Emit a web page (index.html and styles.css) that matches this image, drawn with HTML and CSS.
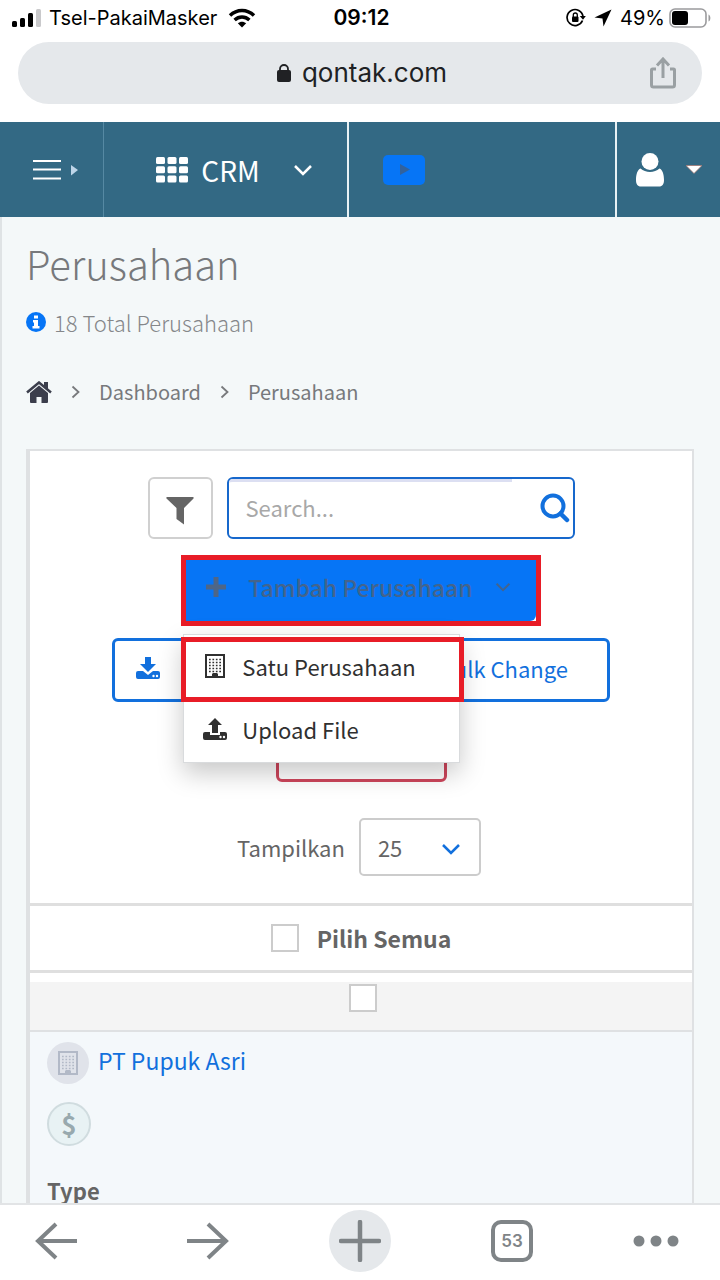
FILE: index.html
```html
<!DOCTYPE html>
<html lang="id">
<head>
<meta charset="utf-8">
<meta name="viewport" content="width=device-width, initial-scale=1">
<title>Perusahaan</title>
<link rel="stylesheet" href="styles.css">
</head>
<body>
<svg class="defs" width="0" height="0" aria-hidden="true">
  <symbol id="building" viewBox="0 0 20 24">
    <path d="M1 1h18v22H1z" fill="none" stroke="currentColor" stroke-width="2"/>
    <path d="M4 5.500h12M4 8.500h12M4 11.500h12M4 14.500h12M4 17.500h12" stroke="currentColor" stroke-width="1.600" stroke-dasharray="1.700 1.733"/>
    <path d="M7 23v-3l1-1h4l1 1v3z" fill="currentColor"/>
  </symbol>
  <symbol id="chevron" viewBox="0 0 20 12">
    <path d="M2 2l8 8 8-8" fill="none" stroke="currentColor" stroke-width="2.500"/>
  </symbol>
</svg>
<div class="status">
  <div class="status-left">
    <svg width="30" height="20" viewBox="0 0 30 20"><rect x="0" y="13" width="5" height="6" rx="1.500"/><rect x="8" y="10" width="5" height="9" rx="1.500"/><rect x="16" y="5" width="5" height="14" rx="1.500"/><rect x="24" y="1" width="5" height="18" rx="1.500" fill="#c9c9cb"/></svg>
    <span>Tsel-PakaiMasker</span>
    <svg class="wifi" width="28" height="20" viewBox="0 0 28 20"><path d="M2 7.500C9 .800 19 .800 26 7.500M6.600 12C11 8 17 8 21.400 12" fill="none" stroke="#000" stroke-width="3.500"/><path d="M9.800 15.300c2.500-2.200 5.900-2.200 8.400 0L14 19.500z"/></svg>
  </div>
  <time class="clock">09:12</time>
  <div class="status-right">
    <svg width="20" height="20" viewBox="0 0 20 20"><path d="M16.500 12.500a8 8 0 1 1 .500-4" fill="none" stroke="#000" stroke-width="1.700"/><path d="M13.800 8h6L17 11.800z"/><rect x="6" y="8.500" width="6.500" height="5.500" rx="1"/><path d="M7.300 9V7a2 2 0 0 1 4 0v2" fill="none" stroke="#000" stroke-width="1.300"/></svg>
    <svg width="18" height="18" viewBox="0 0 18 18"><path d="M17.500 .500L.500 8.500l8 1 1 8z"/></svg>
    <span class="percent">49%</span>
    <svg width="42" height="20" viewBox="0 0 42 20"><rect x="1" y="1" width="36" height="18" rx="5" fill="none" stroke="#9b9b9d" stroke-width="1.600"/><rect x="3" y="3" width="16" height="14" rx="3"/><path d="M39.500 6.500c2.500 1 2.500 6 0 7z" fill="#9b9b9d"/></svg>
  </div>
</div>
<header class="address">
  <button class="url" type="button">
    <svg width="14" height="18" viewBox="0 0 14 18"><rect y="6" width="14" height="12" rx="2"/><path d="M3 7V5a4 4 0 0 1 8 0v2" fill="none" stroke="#202124" stroke-width="1.800"/></svg>
    qontak.com
  </button>
  <button class="share" type="button" aria-label="Bagikan">
    <svg width="26" height="32" viewBox="0 0 26 32" fill="none" stroke="#9aa0a3" stroke-width="3"><path d="M6 12H2.500q-1 0-1 1v15q0 2 2 2h19q2 0 2-2V13q0-1-1-1H20M13 21V3M7 8.500L13 2l6 6.500"/></svg>
  </button>
</header>
<nav class="topnav">
  <button class="cell side" type="button" aria-label="Menu">
    <svg width="46" height="22" viewBox="0 0 46 22"><path d="M0 2h28M0 10.500h28M0 19.500h28" stroke="#fff" stroke-width="1.800"/><path d="M38 6l7 5-7 5.500z" fill="#bed5e8"/></svg>
  </button>
  <button class="cell crm" type="button">
    <svg width="32" height="26" viewBox="0 0 32 26" fill="#fff"><g id="tiles"><rect width="9" height="7" rx="1.500"/><rect x="11.500" width="9" height="7" rx="1.500"/><rect x="23" width="9" height="7" rx="1.500"/></g><use href="#tiles" y="9.200"/><use href="#tiles" y="18.400"/></svg>
    <span>CRM</span>
    <svg class="crm-chevron" width="20" height="12"><use href="#chevron"/></svg>
  </button>
  <div class="cell video">
    <button class="plain" type="button" aria-label="Video"><svg width="42" height="30" viewBox="0 0 42 30"><rect width="42" height="30" rx="5" fill="#0675f6"/><path d="M17 9l10 5.500L17 20z" fill="#32629c"/></svg></button>
  </div>
  <button class="cell user" type="button" aria-label="Akun">
    <svg width="28" height="34" viewBox="0 0 28 34" fill="#fff"><circle cx="14" cy="8.500" r="8.500"/><path d="M4.500 15.500c5 4.500 14 4.500 19 0 3 1 4.500 6 4.500 11.500 0 4-1.500 6.500-5 6.500H5c-3.500 0-5-2.500-5-6.500 0-5.500 1.500-10.500 4.500-11.500z"/></svg>
    <svg width="16" height="9" viewBox="0 0 16 9"><path d="M0 .500h16L8 8.500z" fill="#fff" stroke="#a36e65" stroke-width=".7"/></svg>
  </button>
</nav>
<main class="page">
  <h1>Perusahaan</h1>
  <p class="total">
    <svg width="20" height="20" viewBox="0 0 20 20"><circle cx="10" cy="10" r="10" fill="#0675f6"/><path d="M8 3.500h4v3H8zM7 8h5v6h1.500v2.500h-7V14H8v-3.500H7z" fill="#fff"/></svg>
    18 Total Perusahaan
  </p>
  <nav class="crumbs">
    <a href="#" aria-label="Beranda"><svg width="26" height="22" viewBox="0 0 26 22"><path d="M1 11.500L13 1.500l12 10" fill="none" stroke="#3b3e4c" stroke-width="2.500"/><path d="M18 1h4v8l-4-3z" fill="#3b3e4c"/><path d="M4 12l9-7.500 9 7.500v9q0 1-1 1h-5.500v-6h-5v6H5q-1 0-1-1z" fill="#3b3e4c"/></svg></a>
    <svg class="sep" width="9" height="14" viewBox="0 0 9 14"><path d="M1.500 1.500L7.500 7l-6 5.500" fill="none" stroke="#77797c" stroke-width="1.800"/></svg>
    <a href="#">Dashboard</a>
    <svg class="sep" width="9" height="14" viewBox="0 0 9 14"><path d="M1.500 1.500L7.500 7l-6 5.500" fill="none" stroke="#77797c" stroke-width="1.800"/></svg>
    <a href="#">Perusahaan</a>
  </nav>
  <section class="card">
    <div class="tools">
      <div class="tool-row">
        <button class="filter" type="button" aria-label="Filter"><svg width="28" height="28" viewBox="0 0 28 28"><path d="M1 0h26q1 0 .500 1.500L18 11v16.500L10.500 22V11L.500 1.500Q0 0 1 0z" fill="#656565"/></svg></button>
        <form class="search">
          <input type="search" aria-label="Search" placeholder="Search...">
          <button class="plain" type="button" aria-label="Cari"><svg width="30" height="30" viewBox="0 0 30 30" fill="none" stroke="#1270dd"><circle cx="13" cy="13" r="10.500" stroke-width="4"/><path d="M20.500 20.500L27 27" stroke-width="4.500" stroke-linecap="round"/></svg></button>
        </form>
      </div>
      <div class="add-wrap">
        <button class="add" type="button">
          <svg width="20" height="20" viewBox="0 0 20 20"><path d="M10 0v20M0 10h20" stroke="#4e6687" stroke-width="5"/></svg>
          <span>Tambah Perusahaan</span>
          <svg width="16" height="10"><use href="#chevron"/></svg>
        </button>
        <div class="menu">
          <button class="item marked" type="button"><svg width="20" height="24"><use href="#building"/></svg>Satu Perusahaan</button>
          <button class="item" type="button"><svg width="24" height="22" viewBox="0 0 24 22"><path d="M12 0l7 7h-4v8H9V7H5zM2 14h5v3h10v-3h5q2 0 2 2v4q0 2-2 2H2q-2 0-2-2v-4q0-2 2-2z" fill="#303030"/><circle cx="17.500" cy="19" r="1.200" fill="#fff"/><circle cx="21" cy="19" r="1.200" fill="#fff"/></svg>Upload File</button>
        </div>
      </div>
      <div class="bulk">
        <button class="plain" type="button" aria-label="Unduh"><svg width="24" height="22" viewBox="0 0 24 22"><path d="M9 0h6v7h5l-8 8-8-8h5zM2 14h5l5 4 5-4h5q2 0 2 2v4q0 2-2 2H2q-2 0-2-2v-4q0-2 2-2z" fill="#1270dd"/><circle cx="17.500" cy="19" r="1.200" fill="#fff"/><circle cx="21" cy="19" r="1.200" fill="#fff"/></svg></button>
        <button class="plain" type="button">Bulk Change</button>
      </div>
      <button class="delete" type="button" aria-label="Hapus"></button>
      <div class="show">
        <label for="count">Tampilkan</label>
        <span class="select">
          <select id="count"><option>25</option></select>
          <svg width="20" height="12"><use href="#chevron"/></svg>
        </span>
      </div>
    </div>
    <label class="all"><input class="box" type="checkbox"><span>Pilih Semua</span></label>
    <div class="pick"><input class="box" type="checkbox" aria-label="Pilih PT Pupuk Asri"></div>
    <article class="company">
      <div class="name"><span class="round"><svg width="20" height="24"><use href="#building"/></svg></span><a href="#">PT Pupuk Asri</a></div>
      <span class="round money">$</span>
      <strong class="type">Type</strong>
    </article>
  </section>
</main>
<footer class="browserbar">
  <button class="plain" type="button" aria-label="Kembali"><svg width="42" height="38" viewBox="0 0 42 38" fill="none" stroke="#7f8487" stroke-width="4"><path d="M42 19H3M21 2L3 19l18 17"/></svg></button>
  <button class="plain" type="button" aria-label="Maju"><svg width="42" height="38" viewBox="0 0 42 38" fill="none" stroke="#7f8487" stroke-width="4"><path d="M0 19h39M21 2l18 17-18 17"/></svg></button>
  <button class="plain new" type="button" aria-label="Tab baru"><svg width="42" height="42" viewBox="0 0 42 42"><path d="M21 2v38M2 21h38" stroke="#7f8487" stroke-width="4.500" stroke-linecap="round"/></svg></button>
  <button class="plain" type="button" aria-label="Tab terbuka"><span class="tabs">53</span></button>
  <button class="plain more" type="button" aria-label="Lainnya"><svg width="46" height="12" viewBox="0 0 46 12" fill="#7f8487"><circle cx="6" cy="6" r="5.500"/><circle cx="23" cy="6" r="5.500"/><circle cx="40" cy="6" r="5.500"/></svg></button>
</footer>
</body>
</html>
```
FILE: styles.css
```css
* { box-sizing: border-box; }
body {
  margin: 0;
  height: 100vh;
  display: flex;
  flex-direction: column;
  overflow: hidden;
  background: #fff;
  color: #656565;
  font-family: "Noto Sans CJK SC", "Noto Sans", sans-serif;
  font-size: 22px;
  line-height: 32px;
}
button, input, select { font: inherit; color: inherit; margin: 0; }
button { cursor: pointer; }
a { color: inherit; text-decoration: none; }
svg { display: block; flex: none; }
.defs { position: absolute; }
.plain { border: 0; padding: 0; background: none; }

.status {
  display: grid;
  grid-template-columns: 1fr auto 1fr;
  align-items: center;
  height: 36px;
  padding: 0 9px 0 12px;
  color: #000;
  font-family: Inter, sans-serif;
  font-size: 20px;
  line-height: 24px;
}
.status-left, .status-right { display: flex; align-items: center; gap: 7px; }
.wifi { margin-left: 4px; }
.status-right { justify-content: flex-end; gap: 8px; }
.percent { margin-right: -4px; }
.clock { font-size: 21px; font-weight: 600; }

.address {
  display: flex;
  align-items: center;
  height: 62px;
  margin: 6px 18px 18px;
  padding-left: 56px;
  border-radius: 31px;
  background: #e5e8eb;
}
.url {
  flex: 1;
  display: flex;
  align-items: center;
  justify-content: center;
  gap: 11px;
  border: 0;
  background: none;
  color: #202124;
  font-family: Inter, sans-serif;
  font-size: 26px;
}
.url svg { fill: #202124; }
.share { border: 0; padding: 0 26px 0 0; background: none; }

.topnav {
  flex: none;
  display: grid;
  grid-template-columns: 104px 245px 1fr 103px;
  height: 95px;
  background: #336984;
}
.cell {
  display: flex;
  align-items: center;
  border: 0;
  padding: 0;
  background: none;
  color: #fff;
}
.side { padding-left: 33px; border-right: 1px solid #5689a3; }
.crm {
  justify-content: center;
  gap: 13px;
  padding-left: 18px;
  border-right: 2px solid #e8f1f4;
  font-size: 28px;
}
.crm-chevron { margin-left: 20px; }
.video { padding-left: 34px; border-right: 2px solid #e8f1f4; }
.user { justify-content: center; gap: 22px; }

.page {
  flex: 1;
  min-height: 0;
  overflow: hidden;
  padding: 22px 26px 0 24px;
  border-left: 2px solid #dfe3e5;
  background: #f4f8f9;
}
h1 { margin: 0; color: #77797c; font-size: 40px; font-weight: 300; line-height: 48px; }
.total { display: flex; align-items: center; gap: 8px; margin: 19px 0 38px; color: #85878a; font-weight: 300; }
.crumbs { display: flex; align-items: center; color: #77797c; font-size: 20px; }
.sep { margin: 0 19px; }

.card {
  margin-top: 41px;
  border: 2px solid #dfe1e3;
  border-left-width: 4px;
  border-bottom: 0;
  background: #fff;
}
.tools {
  display: flex;
  flex-direction: column;
  align-items: center;
  padding: 26px 0 27px;
  border-bottom: 3px solid #dfdfdf;
}
.tool-row { display: flex; gap: 14px; }
.filter {
  display: grid;
  place-items: center;
  width: 65px;
  height: 62px;
  padding: 6px 0 0;
  border: 2px solid #d0d0d0;
  border-radius: 6px;
  background: #fff;
}
.search {
  display: flex;
  align-items: center;
  width: 348px;
  padding-right: 3px;
  border: 2px solid #1768cc;
  border-radius: 6px;
}
.search input {
  flex: 1;
  min-width: 0;
  height: 100%;
  padding: 0 17px 6px;
  border: 0;
  border-top: 3px solid #dcdff2;
  border-radius: 4px 0 0;
  background: none;
  outline: 0;
}
.search input::placeholder { color: #a8a8a8; opacity: 1; }
.search .plain { padding-left: 28px; }
.add-wrap { position: relative; margin-top: 16px; border: 5px solid #e81c27; background: #fff; }
.add {
  display: flex;
  align-items: center;
  gap: 22px;
  height: 61px;
  padding: 0 25px 8px 20px;
  border: 0;
  border-radius: 0 0 6px 0;
  background: #0675f6;
  color: #44648c;
  font-size: 23px;
  font-weight: 500;
}
.menu {
  position: absolute;
  z-index: 1;
  top: 74px;
  left: -3px;
  display: flex;
  flex-direction: column;
  gap: 9px;
  width: 277px;
  padding: 7px 0 6px 2px;
  border: 1px solid #d9dbdd;
  background: #fff;
  box-shadow: 0 10px 24px rgb(0 0 0 / 22%);
}
.item {
  display: flex;
  align-items: center;
  gap: 15px;
  height: 50px;
  padding: 0 0 4px 17px;
  border: 0;
  background: none;
  color: #303030;
}
.item svg { width: 24px; }
.marked { height: 55px; padding-bottom: 8px; outline: 5px solid #e81c27; }
.bulk {
  display: flex;
  align-items: center;
  justify-content: space-between;
  width: 498px;
  height: 64px;
  margin-top: 12px;
  padding: 0 39px 4px 21px;
  border: 3px solid #1270dd;
  border-radius: 6px;
  color: #1270dd;
}
.delete {
  width: 171px;
  height: 64px;
  margin-top: 16px;
  border: 3px solid #ce465c;
  border-radius: 6px;
  background: none;
}
.show { display: flex; align-items: center; gap: 14px; margin-top: 36px; padding-right: 4px; }
.select { position: relative; }
.select select {
  display: block;
  width: 122px;
  height: 58px;
  padding: 0 17px;
  border: 2px solid #ccc;
  border-radius: 5px;
  appearance: none;
  background: #fff;
}
.select svg { position: absolute; right: 20px; top: 25px; color: #1270dd; pointer-events: none; }
.all {
  display: flex;
  align-items: center;
  justify-content: center;
  gap: 18px;
  height: 67px;
  border-bottom: 3px solid #dfdfdf;
  font-size: 23px;
  font-weight: 700;
}
.box {
  appearance: none;
  width: 28px;
  height: 28px;
  margin: 0;
  border: 2px solid #ccc;
  background: #fff;
}
.pick {
  display: flex;
  justify-content: center;
  height: 50px;
  margin-top: 9px;
  padding: 2px 0 0 4px;
  border-bottom: 2px solid #dfe1e3;
  background: #f4f4f4;
}
.company { display: flex; flex-direction: column; gap: 18px; padding: 10px 17px; background: #f4f8fb; }
.name { display: flex; align-items: center; gap: 9px; color: #1270dd; font-size: 23px; }
.name a { padding-bottom: 6px; }
.round {
  display: grid;
  place-items: center;
  width: 42px;
  height: 42px;
  border-radius: 50%;
  background: #e0e3ea;
  color: #b2b9c7;
}
.money {
  width: 44px;
  height: 44px;
  border: 2px solid #d0dcdf;
  background: #e8f2f4;
  color: #98a9ae;
  font-size: 26px;
  font-weight: 700;
}
.type { margin-top: 10px; }

.browserbar {
  flex: none;
  display: flex;
  align-items: center;
  justify-content: space-between;
  height: 77px;
  padding: 0 25px 4px;
  border-top: 2px solid #e2e4e6;
}
.browserbar .plain { display: grid; place-items: center; width: 62px; height: 62px; }
.browserbar .new { border-radius: 50%; background: #e5e8eb; }
.browserbar .more { justify-items: start; }
.tabs {
  display: grid;
  place-items: center;
  width: 42px;
  height: 42px;
  border: 4px solid #7f8487;
  border-radius: 10px;
  color: #7f8487;
  font-family: Inter, sans-serif;
  font-size: 17px;
  font-weight: 600;
}
```
